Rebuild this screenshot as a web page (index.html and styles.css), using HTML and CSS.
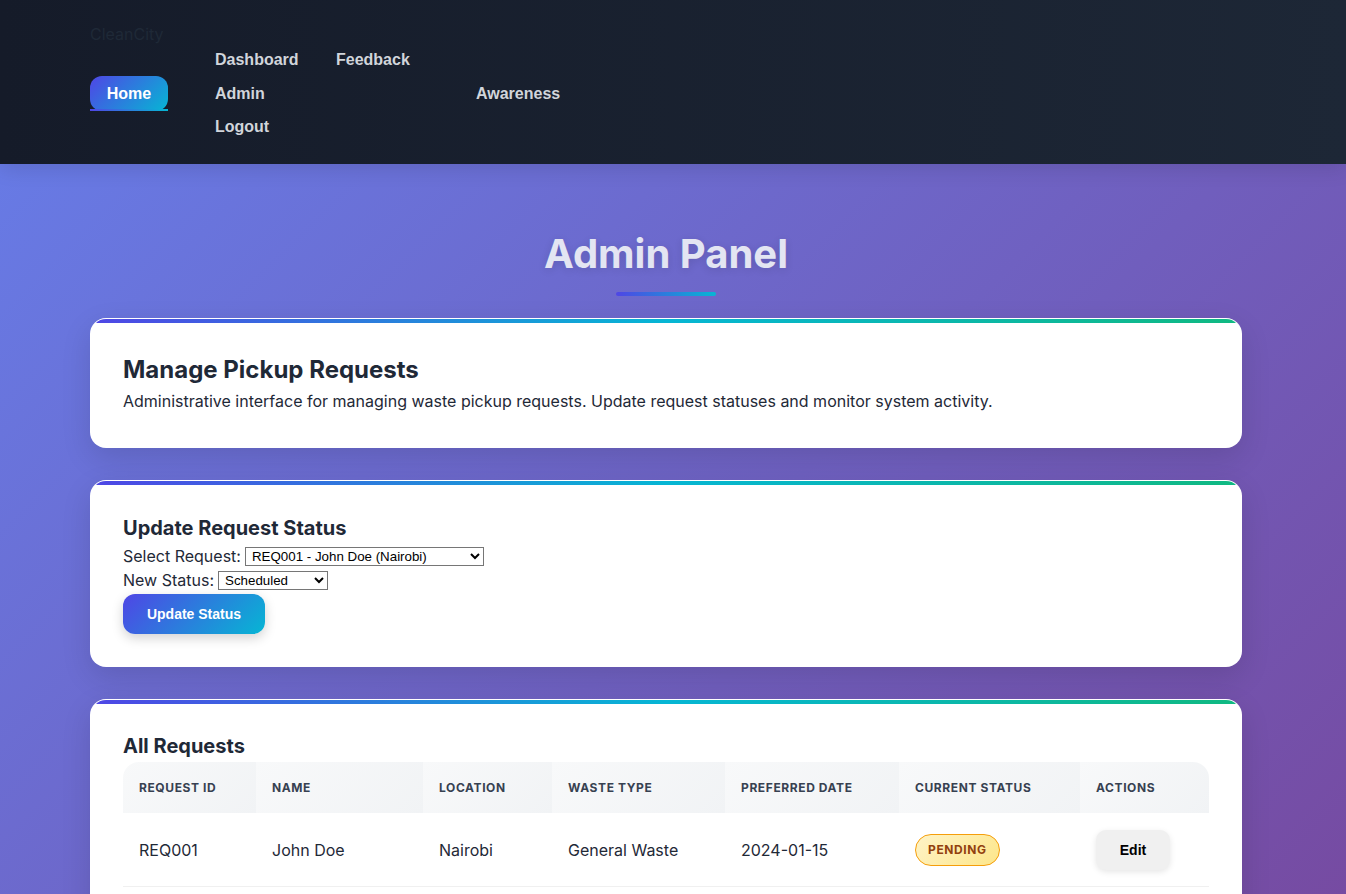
FILE: index.html
```html
<!DOCTYPE html>
<html lang="en">
<head>
<meta charset="utf-8">
<title>CleanCity - Admin Panel</title>
<link rel="stylesheet" href="styles.css">
</head>
<body>
<header class="site-header">
  <div class="logo">CleanCity</div>
  <nav class="nav">
    <a class="nav-link home active" href="#">Home</a>
    <a class="nav-link dash" href="#">Dashboard</a>
    <a class="nav-link feed" href="#">Feedback</a>
    <a class="nav-link admin" href="#">Admin</a>
    <a class="nav-link aware" href="#">Awareness</a>
    <a class="nav-link logout" href="#">Logout</a>
  </nav>
</header>

<main class="main">
  <div class="title-wrap">
    <h1 class="page-title">Admin Panel</h1>
    <div class="title-bar"></div>
  </div>

  <section class="card intro">
    <h2 class="card-title">Manage Pickup Requests</h2>
    <p class="card-text">Administrative interface for managing waste pickup requests. Update request statuses and monitor system activity.</p>
  </section>

  <section class="card form-card">
    <h3 class="section-title">Update Request Status</h3>
    <div class="form-row">
      <label class="form-label" for="req">Select Request:</label>
      <select id="req" class="select select-req">
        <option>REQ001 - John Doe (Nairobi)</option>
        <option>REQ002 - Jane Smith (Mombasa)</option>
      </select>
    </div>
    <div class="form-row">
      <label class="form-label" for="status">New Status:</label>
      <select id="status" class="select select-status">
        <option>Scheduled</option>
        <option>Pending</option>
        <option>Completed</option>
      </select>
    </div>
    <button class="btn-primary" type="button">Update Status</button>
  </section>

  <section class="card table-card">
    <h3 class="section-title">All Requests</h3>
    <table class="req-table">
      <thead>
        <tr>
          <th class="c-id">Request ID</th>
          <th class="c-name">Name</th>
          <th class="c-loc">Location</th>
          <th class="c-type">Waste Type</th>
          <th class="c-date">Preferred Date</th>
          <th class="c-status">Current Status</th>
          <th class="c-act">Actions</th>
        </tr>
      </thead>
      <tbody>
        <tr>
          <td>REQ001</td>
          <td>John Doe</td>
          <td>Nairobi</td>
          <td>General Waste</td>
          <td>2024-01-15</td>
          <td><span class="badge pending">Pending</span></td>
          <td><button class="btn-edit" type="button">Edit</button></td>
        </tr>
      </tbody>
    </table>
  </section>
</main>
</body>
</html>
```

FILE: styles.css
```css
* { box-sizing: border-box; }

html, body { margin: 0; padding: 0; }

body {
  font-family: Inter, "Noto Sans", "Liberation Sans", sans-serif;
  color: #1f2937;
  background: linear-gradient(135deg, #667eea 0%, #764ba2 100%) fixed;
  min-height: 100vh;
}

/* Header */
.site-header {
  background: linear-gradient(90deg, #151b29 0%, #1d2736 100%);
  padding: 24px 104px 20px 90px;
  height: 164px;
  box-shadow: 0 4px 20px rgba(0, 0, 0, 0.12);
  position: relative;
  z-index: 2;
}

.logo {
  font-size: 16px;
  line-height: 20px;
  color: #1f2937;
  height: 19px;
}

.nav {
  display: grid;
  grid-template-columns: 125px 121px 140px auto;
  grid-template-rows: 33px 34px 33px;
  align-items: center;
  justify-items: start;
}

.nav-link {
  font-family: "Liberation Sans", Arial, sans-serif;
  font-weight: 700;
  font-size: 16px;
  color: #d1d5db;
  text-decoration: none;
  line-height: 19px;
}

.home { grid-column: 1; grid-row: 2; }
.dash { grid-column: 2; grid-row: 1; }
.feed { grid-column: 3; grid-row: 1; }
.admin { grid-column: 2; grid-row: 2; }
.aware { grid-column: 4; grid-row: 2; }
.logout { grid-column: 2; grid-row: 3; }

.nav-link.active {
  position: relative;
  color: #ffffff;
  width: 78px;
  height: 35px;
  line-height: 35px;
  text-align: center;
  border-radius: 12px;
  background: linear-gradient(135deg, #4f46e5 0%, #06b6d4 100%);
}

.nav-link.active::after {
  content: "";
  position: absolute;
  left: 0;
  right: 0;
  bottom: 0;
  height: 2px;
  background: linear-gradient(90deg, #4f46e5, #06b6d4);
}

/* Main */
.main {
  margin: 0 104px 0 90px;
  padding: 65px 0 40px;
}

.title-wrap {
  display: flex;
  flex-direction: column;
  align-items: center;
}

.page-title {
  margin: 0;
  font-size: 40px;
  line-height: 50px;
  font-weight: 700;
  color: #e3e5f2;
  text-shadow: 0 2px 8px rgba(0, 0, 0, 0.12);
}

.title-bar {
  width: 100px;
  height: 4px;
  margin-top: 13px;
  border-radius: 2px;
  background: linear-gradient(90deg, #4f46e5, #06b6d4);
}

.card {
  position: relative;
  overflow: hidden;
  background: #ffffff;
  border: 1px solid rgba(255, 255, 255, 0.9);
  border-radius: 16px;
  box-shadow: 0 10px 30px rgba(0, 0, 0, 0.12);
  padding: 36px 32px 32px;
  margin-top: 32px;
}

.card::before {
  content: "";
  position: absolute;
  top: 0;
  left: 0;
  right: 0;
  height: 4px;
  background: linear-gradient(90deg, #4f46e5 0%, #06b6d4 50%, #10b981 100%);
}

.intro {
  margin-top: 22px;
  padding-bottom: 34px;
}

.form-card { padding-top: 35px; }

.card-title {
  margin: 0 0 5px;
  font-size: 24px;
  line-height: 29px;
  font-weight: 700;
  color: #1f2937;
}

.card-text {
  margin: 0;
  font-size: 16px;
  line-height: 24px;
  color: #1f2937;
}

.section-title {
  margin: 0 0 4px;
  font-size: 20px;
  line-height: 24px;
  font-weight: 700;
  color: #1f2937;
}

.form-row {
  display: flex;
  align-items: center;
  gap: 4px;
  height: 24px;
}

.form-label {
  font-size: 16px;
  line-height: 24px;
  color: #1f2937;
}

.select {
  font-family: "Liberation Sans", Arial, sans-serif;
  font-size: 13.33px;
  height: 19px;
  padding: 0 0 0 2px;
  border: 1px solid #767676;
  border-radius: 0;
  background: #fff;
  color: #000;
}

.select-req { width: 239px; }
.select-status { width: 110px; }

.btn-primary {
  margin-top: 2px;
  font-family: "Liberation Sans", Arial, sans-serif;
  font-weight: 700;
  font-size: 14px;
  color: #ffffff;
  height: 40px;
  width: 142px;
  border: none;
  border-radius: 12px;
  background: linear-gradient(135deg, #4f46e5 0%, #06b6d4 100%);
  box-shadow: 0 4px 12px rgba(0, 0, 0, 0.18);
}

.table-card { padding-top: 34px; }

.req-table {
  width: 100%;
  table-layout: fixed;
  border-collapse: separate;
  border-spacing: 0;
}

.req-table th {
  height: 51px;
  padding: 0 16px;
  text-align: left;
  font-size: 12px;
  font-weight: 700;
  text-transform: uppercase;
  letter-spacing: 0.05em;
  color: #374151;
  background: linear-gradient(135deg, #f8f9fa 0%, #f1f3f5 100%);
}

.req-table th:first-child { border-top-left-radius: 16px; }
.req-table th:last-child { border-top-right-radius: 16px; }

.c-id { width: 133px; }
.c-name { width: 167px; }
.c-loc { width: 129px; }
.c-type { width: 173px; }
.c-date { width: 174px; }
.c-status { width: 181px; }
.c-act { width: 129px; }

.req-table td {
  padding: 16px;
  font-size: 16px;
  line-height: 24px;
  color: #1f2937;
  border-bottom: 1px solid #f0f0f0;
  vertical-align: middle;
}

.badge {
  display: inline-block;
  height: 32px;
  line-height: 30px;
  padding: 0 12px;
  border-radius: 16px;
  font-size: 12px;
  font-weight: 700;
  letter-spacing: 0.05em;
  text-transform: uppercase;
}

.badge.pending {
  color: #92400e;
  border: 1px solid #f59e0b;
  background: linear-gradient(135deg, #fef3c7 0%, #fde68a 100%);
}

.btn-edit {
  font-family: "Liberation Sans", Arial, sans-serif;
  font-weight: 700;
  font-size: 14px;
  color: #000;
  width: 74px;
  height: 40px;
  margin-top: 1px;
  border: none;
  border-radius: 10px;
  background: #f0f0f0;
  box-shadow: 0 2px 6px rgba(0, 0, 0, 0.1);
}
```
